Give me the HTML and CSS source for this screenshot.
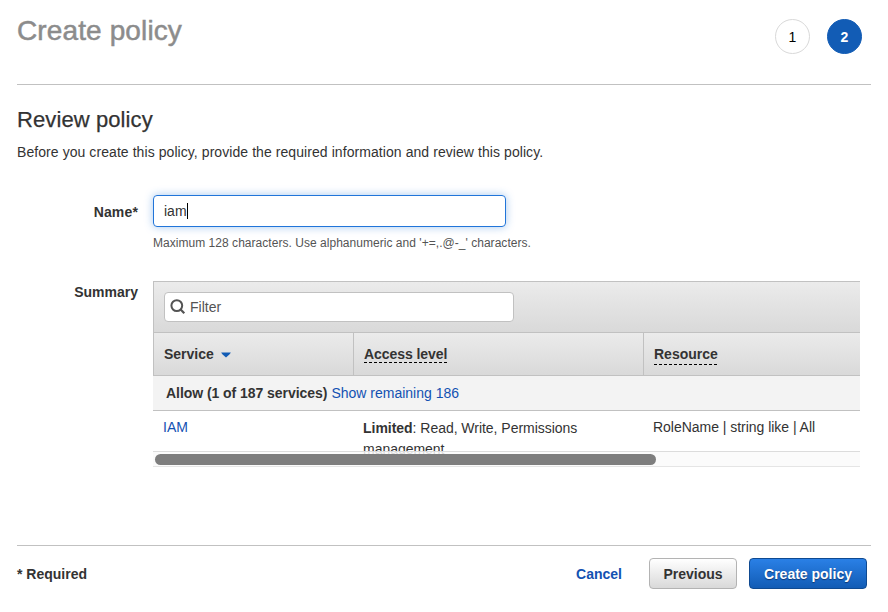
FILE: index.html
```html
<!DOCTYPE html>
<html lang="en">
<head>
<meta charset="utf-8">
<title>Create policy</title>
<link rel="stylesheet" href="styles.css">
</head>
<body>
<header class="header">
  <h1 class="title">Create policy</h1>
  <div class="steps">
    <span class="step">1</span>
    <span class="step step-active">2</span>
  </div>
</header>
<main class="main">
  <h2 class="subtitle">Review policy</h2>
  <p class="intro">Before you create this policy, provide the required information and review this policy.</p>
  <div class="form-row">
    <div class="label name-label">Name*</div>
    <div class="field">
      <div class="input"><span class="value">iam</span><span class="caret"></span></div>
      <div class="hint">Maximum 128 characters. Use alphanumeric and '+=,.@-_' characters.</div>
    </div>
  </div>
  <div class="form-row summary-row">
    <div class="label">Summary</div>
    <div class="table">
      <div class="toolbar">
        <div class="filter">
          <svg class="search" width="16" height="16" viewBox="0 0 16 16" fill="none" stroke="#545454"><circle cx="6.8" cy="6.6" r="5.4" stroke-width="2"/><path d="M10.6 10.4L14.3 14.2" stroke-width="2.2"/></svg>
          <span class="placeholder">Filter</span>
        </div>
      </div>
      <div class="columns head">
        <div class="th"><span class="service">Service</span><svg class="arrow" width="10" height="6" viewBox="0 0 10 6"><path d="M.2.5H9.8Q9.4 1.8 5 5.6Q.6 1.8 .2.5Z" fill="#125cb5"/></svg></div>
        <div class="th"><span class="dashed access">Access level</span></div>
        <div class="th"><span class="dashed resource">Resource</span></div>
      </div>
      <div class="group"><b class="allow">Allow (1 of 187 services)</b><a class="link remaining">Show remaining 186</a></div>
      <div class="viewport">
        <div class="columns">
          <div class="td"><a class="link">IAM</a></div>
          <div class="td td-access"><b>Limited</b>: Read, Write, Permissions management</div>
          <div class="td td-resource">RoleName | string like | All</div>
        </div>
        <div class="scrollbar"><div class="thumb"></div></div>
      </div>
    </div>
  </div>
</main>
<footer class="footer">
  <b class="required">* Required</b>
  <div class="actions">
    <a class="link cancel">Cancel</a>
    <button class="button previous">Previous</button>
    <button class="button primary">Create policy</button>
  </div>
</footer>
</body>
</html>
```
FILE: styles.css
```css
* { box-sizing: border-box; }
body {
  margin: 0;
  width: 888px;
  height: 612px;
  padding: 0 17px;
  overflow: hidden;
  background: #fff;
  color: #333;
  font: 14px/20px "Liberation Sans", Arial, sans-serif;
  display: flex;
  flex-direction: column;
}
h1, h2, p { margin: 0; font-weight: 400; }
.header {
  height: 85px;
  border-bottom: 1px solid #c1c1c1;
  display: flex;
  justify-content: space-between;
}
.title {
  margin-top: 15px;
  font-size: 28px;
  line-height: 32px;
  color: #8c8c8c;
  letter-spacing: .12px;
  -webkit-text-stroke: .5px #8c8c8c;
}
.steps { display: flex; gap: 17px; padding: 19px 9px 0 0; }
.step {
  width: 35px;
  height: 35px;
  border: 1px solid #d9d9d9;
  border-radius: 50%;
  text-align: center;
  line-height: 34px;
  color: #000;
}
.step-active { background: #125cb5; border-color: #125cb5; color: #fff; font-weight: 700; }
.main { height: 460px; }
.subtitle { padding-top: 21px; font-size: 22px; line-height: 28px; letter-spacing: .1px; -webkit-text-stroke: .25px #333; }
.intro { margin-top: 8px; letter-spacing: .07px; white-space: nowrap; }
.form-row { display: flex; }
.label { width: 121px; margin-right: 15px; text-align: right; font-weight: 700; }
.name-label { padding-top: 40px; letter-spacing: .15px; }
.field { padding-top: 33px; }
.input {
  width: 353px;
  height: 32px;
  padding: 0 10px;
  border: 1px solid #2175d9;
  border-radius: 4px;
  box-shadow: 0 0 8px rgba(33, 117, 217, .4);
  display: flex;
  align-items: center;
}
.caret { width: 1px; height: 16px; background: #000; }
.hint { margin-top: 7px; font-size: 12px; line-height: 18px; letter-spacing: .035px; color: #545454; white-space: nowrap; }
.summary-row { margin-top: 29px; }
.summary-row .label { padding-top: 1px; }
.table { width: 707px; }
.toolbar, .head { border-left: 1px solid #c1c1c1; background: linear-gradient(#ebebeb, #d9d9d9); }
.toolbar { height: 51px; padding: 10px 10px 0; border-top: 1px solid #c1c1c1; }
.filter {
  width: 350px;
  height: 30px;
  padding-left: 5px;
  border: 1px solid #c1c1c1;
  border-radius: 4px;
  background: #fff;
  color: #545454;
  display: flex;
  align-items: center;
}
.search { margin-right: 4px; }
.columns { display: grid; grid-template-columns: 200px 290px 217px; }
.head { height: 44px; border-top: 1px solid #c1c1c1; border-bottom: 1px solid #c1c1c1; grid-template-columns: 199px 290px 217px; }
.th { padding: 11px 10px 0; font-weight: 700; }
.th + .th { border-left: 1px solid #c1c1c1; }
.arrow { margin: 0 0 1px 7px; }
.dashed {
  display: inline-block;
  background: repeating-linear-gradient(90deg, #000 0 3px, transparent 3px 5px) 0 100% / 100% 1px no-repeat;
}
.access { height: 19px; letter-spacing: -.07px; }
.resource { height: 21px; }
.group { height: 35px; padding: 7px 13px; border-bottom: 1px solid #c1c1c1; background: #f3f3f3; }
.allow { letter-spacing: -.05px; }
.link { color: #1251b2; }
.remaining { margin-left: 4px; }
.viewport { position: relative; height: 56px; overflow: hidden; }
.td { padding: 6px 10px 0; line-height: 21px; }
.td-access { padding-top: 7px; }
.td-access, .td-resource { letter-spacing: -.03px; }
.scrollbar {
  position: absolute;
  left: 0;
  right: 0;
  bottom: 0;
  height: 16px;
  padding: 2px;
  border-top: 1px solid #dcdcdc;
  border-bottom: 1px solid #e5e5e5;
  background: rgba(250, 250, 250, .85);
}
.thumb { width: 501px; height: 11px; border-radius: 6px; background: #7e7e7e; }
.footer {
  height: 67px;
  border-top: 1px solid #c1c1c1;
  padding: 12px 4px 0 0;
  display: flex;
  justify-content: space-between;
}
.required { line-height: 32px; }
.actions { display: flex; }
.cancel { margin-right: 27px; font-weight: 700; line-height: 32px; }
.button {
  height: 31px;
  padding: 2px 0 0;
  border-radius: 4px;
  font: 700 14px/27px "Liberation Sans", Arial, sans-serif;
}
.previous {
  width: 88px;
  margin-right: 12px;
  border: 1px solid #b3b3b3;
  background: linear-gradient(#fff, #d9d9d9);
  color: #333;
}
.primary {
  width: 118px;
  border: 1px solid #0f4a91;
  background: linear-gradient(#2a80e6, #125cb5);
  color: #fff;
  text-shadow: 0 1px 1px #0f3872;
}
```
